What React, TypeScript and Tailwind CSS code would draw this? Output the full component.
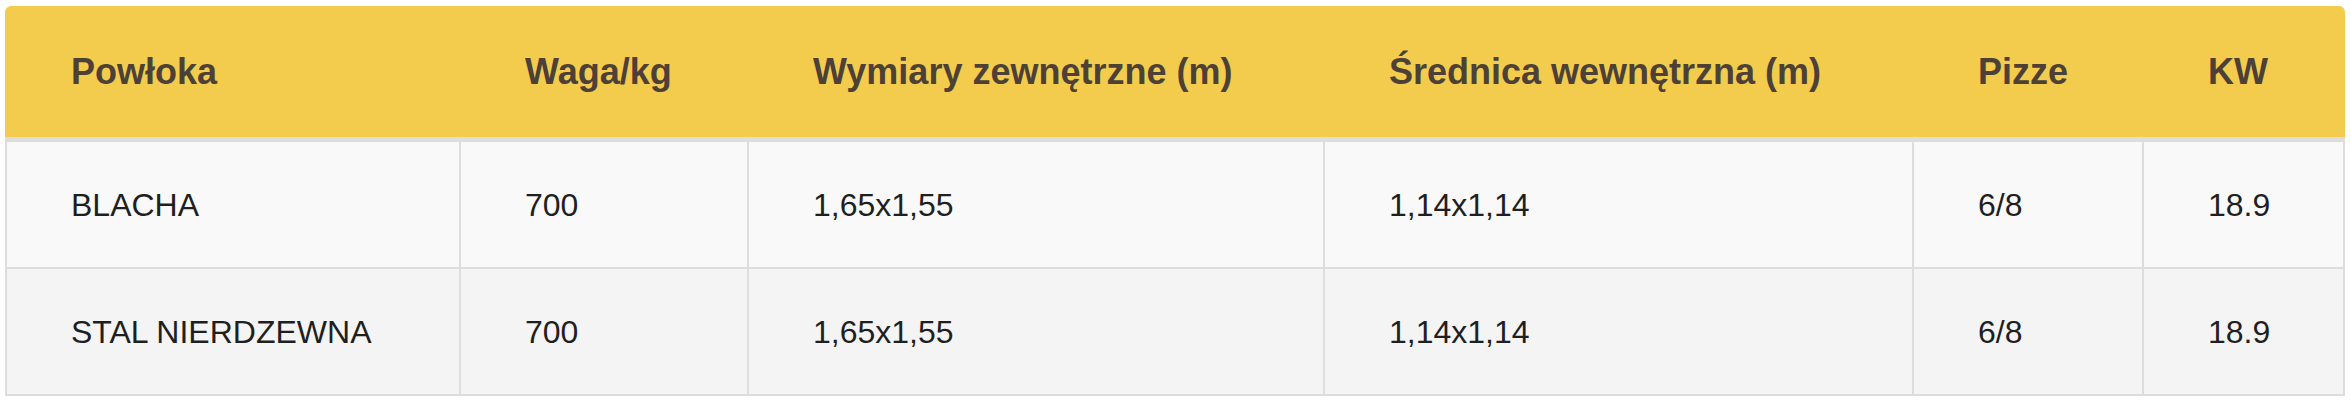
const columns = ['Powłoka', 'Waga/kg', 'Wymiary zewnętrzne (m)', 'Średnica wewnętrzna (m)', 'Pizze', 'KW'];

const rows = [
  { coating: 'BLACHA', weight: '700', outer: '1,65x1,55', inner: '1,14x1,14', pizzas: '6/8', kw: '18.9' },
  { coating: 'STAL NIERDZEWNA', weight: '700', outer: '1,65x1,55', inner: '1,14x1,14', pizzas: '6/8', kw: '18.9' },
];

const grid = 'grid grid-cols-[454px_288px_576px_589px_230px_203px]';

export default function App() {
  return (
    <div className="bg-white w-[2351px] h-[402px] pt-[6px] pl-[5px] font-['Liberation_Sans',Arial,sans-serif]">
      <div className="w-[2340px] rounded-t-[6px] overflow-hidden">
        {/* Header */}
        <div className={`${grid} h-[136px] bg-[#f3cc4d] border-b-[5px] border-[#dddddd]`}>
          {columns.map((c) => (
            <div key={c} className="flex items-center pl-[66px] text-[36px] font-bold text-[#4d4137]">
              {c}
            </div>
          ))}
        </div>

        {/* Body */}
        {rows.map((r, i) => (
          <div
            key={r.coating}
            className={`${grid} h-[127px] border-b-2 border-[#dddddd] ${i % 2 === 0 ? 'bg-[#f9f9f9]' : 'bg-[#f4f4f4]'}`}
          >
            {[r.coating, r.weight, r.outer, r.inner, r.pizzas, r.kw].map((v, j) => (
              <div
                key={j}
                className={`flex items-center pl-[64px] border-l-2 border-[#dddddd] text-[32px] text-[#1f1f1f] ${j === 5 ? 'border-r-2' : ''}`}
              >
                {v}
              </div>
            ))}
          </div>
        ))}
      </div>
    </div>
  );
}
